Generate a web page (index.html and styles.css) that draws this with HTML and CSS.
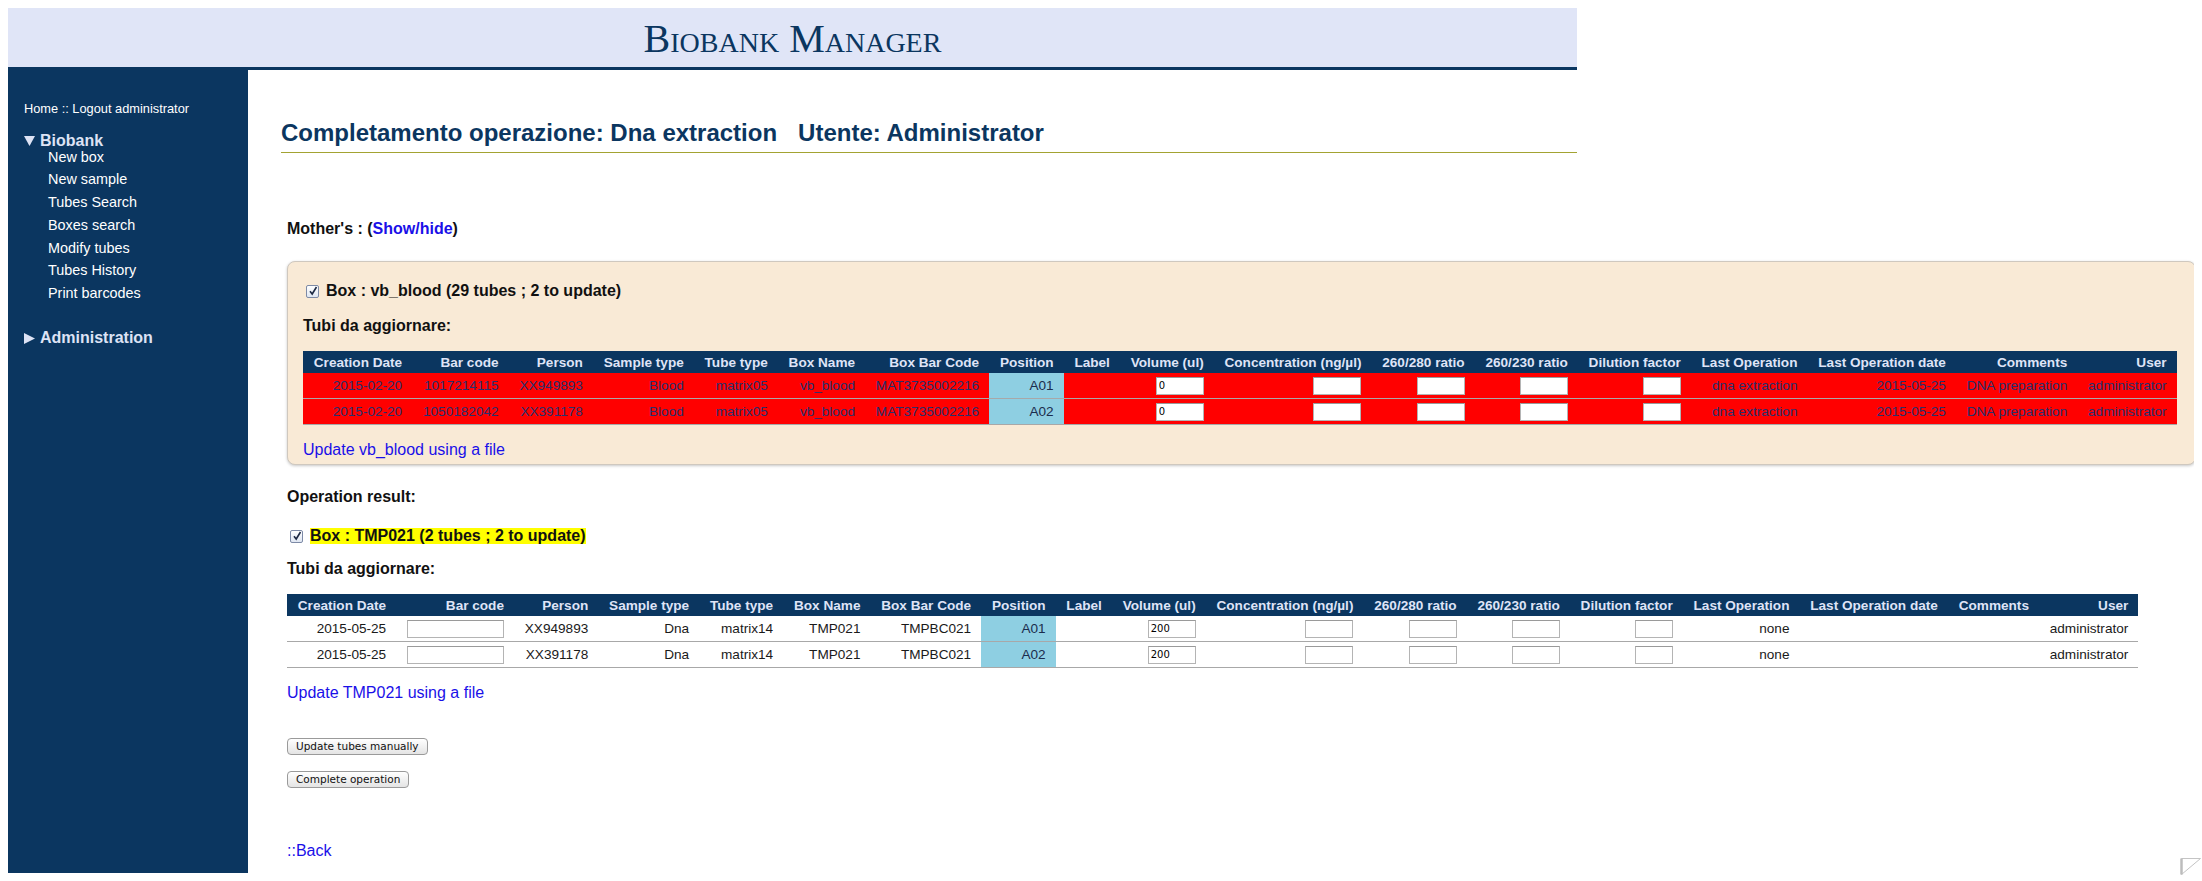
FILE: index.html
```html
<!DOCTYPE html>
<html lang="it">
<head>
<meta charset="utf-8">
<title>Biobank Manager</title>
<link rel="stylesheet" href="styles.css">
</head>
<body>
<header class="banner"><span class="brand">Biobank Manager</span></header>
<div class="layout">
  <nav class="sidebar">
    <div class="userline">Home :: Logout administrator</div>
    <div class="menu-title"><svg class="tri" width="11" height="10" viewBox="0 0 11 10"><polygon points="0,0 11,0 5.5,10" fill="#dde3f5"/></svg>Biobank</div>
    <ul class="menu-items">
      <li>New box</li>
      <li>New sample</li>
      <li>Tubes Search</li>
      <li>Boxes search</li>
      <li>Modify tubes</li>
      <li>Tubes History</li>
      <li>Print barcodes</li>
    </ul>
    <div class="menu-title admin"><svg class="tri" width="11" height="11" viewBox="0 0 11 11"><polygon points="0,0 11,5.5 0,11" fill="#dde3f5"/></svg>Administration</div>
  </nav>
  <main class="main">
    <h1 class="page-title">Completamento operazione: Dna extraction<span class="title-user">Utente: Administrator</span></h1>
    <div class="content">
      <div class="mother">Mother's : (<a class="link" href="#">Show/hide</a>)</div>
      <div class="panel">
        <div class="box-line"><span class="check"><svg width="10" height="10" viewBox="0 0 10 10"><path d="M2 5.2 L4.2 8 L8.5 1" fill="none" stroke="#1e2a44" stroke-width="1.6"/></svg></span>Box : vb_blood (29 tubes ; 2 to update)</div>
        <div class="subhead">Tubi da aggiornare:</div>
        <table class="tubes">
          <thead>
            <tr><th>Creation Date</th><th>Bar code</th><th>Person</th><th>Sample type</th><th>Tube type</th><th>Box Name</th><th>Box Bar Code</th><th>Position</th><th>Label</th><th>Volume (ul)</th><th>Concentration (ng/µl)</th><th>260/280 ratio</th><th>260/230 ratio</th><th>Dilution factor</th><th>Last Operation</th><th>Last Operation date</th><th>Comments</th><th>User</th></tr>
          </thead>
          <tbody class="alert">
            <tr><td>2015-02-20</td><td>1017214115</td><td>XX949893</td><td>Blood</td><td>matrix05</td><td>vb_blood</td><td>MAT3735002216</td><td class="pos">A01</td><td></td><td><input class="fld" value="0"></td><td><input class="fld"></td><td><input class="fld"></td><td><input class="fld"></td><td><input class="fld sm"></td><td>dna extraction</td><td>2015-05-25</td><td>DNA preparation</td><td>administrator</td></tr>
            <tr><td>2015-02-20</td><td>1050182042</td><td>XX391178</td><td>Blood</td><td>matrix05</td><td>vb_blood</td><td>MAT3735002216</td><td class="pos">A02</td><td></td><td><input class="fld" value="0"></td><td><input class="fld"></td><td><input class="fld"></td><td><input class="fld"></td><td><input class="fld sm"></td><td>dna extraction</td><td>2015-05-25</td><td>DNA preparation</td><td>administrator</td></tr>
          </tbody>
        </table>
        <a class="link file-link" href="#">Update vb_blood using a file</a>
      </div>

      <div class="section-title">Operation result:</div>
      <div class="box-line result"><span class="check"><svg width="10" height="10" viewBox="0 0 10 10"><path d="M2 5.2 L4.2 8 L8.5 1" fill="none" stroke="#1e2a44" stroke-width="1.6"/></svg></span><span class="hl">Box : TMP021 (2 tubes ; 2 to update)</span></div>
      <div class="subhead">Tubi da aggiornare:</div>
      <table class="tubes">
        <thead>
          <tr><th>Creation Date</th><th>Bar code</th><th>Person</th><th>Sample type</th><th>Tube type</th><th>Box Name</th><th>Box Bar Code</th><th>Position</th><th>Label</th><th>Volume (ul)</th><th>Concentration (ng/µl)</th><th>260/280 ratio</th><th>260/230 ratio</th><th>Dilution factor</th><th>Last Operation</th><th>Last Operation date</th><th>Comments</th><th>User</th></tr>
        </thead>
        <tbody class="plain">
          <tr><td>2015-05-25</td><td><input class="fld wide"></td><td>XX949893</td><td>Dna</td><td>matrix14</td><td>TMP021</td><td>TMPBC021</td><td class="pos">A01</td><td></td><td><input class="fld" value="200"></td><td><input class="fld"></td><td><input class="fld"></td><td><input class="fld"></td><td><input class="fld sm"></td><td>none</td><td></td><td></td><td>administrator</td></tr>
          <tr><td>2015-05-25</td><td><input class="fld wide"></td><td>XX391178</td><td>Dna</td><td>matrix14</td><td>TMP021</td><td>TMPBC021</td><td class="pos">A02</td><td></td><td><input class="fld" value="200"></td><td><input class="fld"></td><td><input class="fld"></td><td><input class="fld"></td><td><input class="fld sm"></td><td>none</td><td></td><td></td><td>administrator</td></tr>
        </tbody>
      </table>
      <a class="link file-link" href="#">Update TMP021 using a file</a>

      <div class="actions">
        <button class="btn" type="button">Update tubes manually</button>
        <button class="btn" type="button">Complete operation</button>
      </div>

      <a class="link back" href="#">::Back</a>
    </div>
  </main>
</div>
<svg class="grip" width="22" height="19" viewBox="0 0 22 19"><path d="M1.5 1.5 H20.5 L1.5 17.5 Z" fill="#fff" stroke="#c4c4c4" stroke-width="1"/><line x1="1.5" y1="1.5" x2="1.5" y2="17.5" stroke="#bcbcbc" stroke-width="2.5"/></svg>
</body>
</html>
```

FILE: styles.css
```css
html, body {
  overflow: hidden;
}

body {
  margin: 8px;
  font-family: "Liberation Sans", Arial, Helvetica, sans-serif;
  font-size: 16px;
  color: #111;
  background: #fff;
}

.banner {
  width: 1569px;
  height: 59px;
  background: #e0e5f7;
  border-bottom: 3px solid #0b3660;
  text-align: center;
  font-family: "Liberation Serif", "Times New Roman", serif;
  font-variant: small-caps;
  font-size: 40px;
  line-height: 61px;
  color: #0b3660;
}

.layout {
  display: flex;
  align-items: stretch;
}

.sidebar {
  flex: none;
  width: 240px;
  box-sizing: border-box;
  background: #0b3660;
  padding: 31px 0 0 16px;
  color: #fff;
}

.userline {
  font-size: 12.8px;
  line-height: 16px;
}

.menu-title {
  margin-top: 15px;
  font-size: 16px;
  font-weight: bold;
  line-height: 18px;
  color: #dde3f5;
  display: flex;
  align-items: center;
}

.menu-title .tri {
  margin-right: 5px;
  flex: none;
}

.menu-title.admin {
  margin-top: 24px;
}

.menu-items {
  list-style: none;
  margin: -4.5px 0 0;
  padding: 0 0 0 24px;
  font-size: 14.4px;
  line-height: 22.8px;
  color: #fff;
}

.main {
  flex: none;
  width: 1329px;
  box-sizing: border-box;
  padding: 49px 0 12px 33px;
}

.page-title {
  margin: 0;
  padding-bottom: 5px;
  border-bottom: 1px solid #a3a332;
  font-size: 24px;
  line-height: 28px;
  color: #0b3660;
  white-space: nowrap;
}

.title-user {
  margin-left: 21px;
}

.content {
  padding-left: 6px;
}

.mother {
  margin-top: 66px;
  font-weight: bold;
  line-height: 20px;
}

.link {
  color: #1a10e8;
  text-decoration: none;
}

.panel {
  width: max-content;
  margin-top: 22px;
  padding: 19px 18px 4px 15px;
  background: #f9ead6;
  border: 1px solid #cfc8bf;
  border-radius: 8px;
  box-shadow: 0 1px 3px rgba(0, 0, 0, 0.22);
}

.box-line {
  display: flex;
  align-items: center;
  font-weight: bold;
  line-height: 20px;
}

.check {
  flex: none;
  width: 11px;
  height: 11px;
  margin: 0 7px 0 3px;
  border: 1px solid #7d8aa6;
  border-radius: 2px;
  background: linear-gradient(#ffffff, #dfe6f2);
  display: flex;
  align-items: center;
  justify-content: center;
}

.box-line.result {
  margin-top: 21px;
}

.hl {
  background: #ffff00;
  line-height: 16px;
}

.subhead {
  margin-top: 15px;
  font-weight: bold;
  line-height: 20px;
}

.section-title {
  margin-top: 22px;
  font-weight: bold;
  line-height: 20px;
}

.tubes {
  margin-top: 15px;
  border-collapse: collapse;
  font-size: 13.6px;
}

.tubes th {
  height: 22px;
  padding: 0 10px 0 10.8px;
  background: #0b3660;
  color: #dfe4f7;
  font-weight: bold;
  text-align: right;
  white-space: nowrap;
}

.tubes td {
  height: 25px;
  padding: 0 10px 0 10.8px;
  text-align: right;
  white-space: nowrap;
  border-bottom: 1px solid #a8a8a8;
}

.alert td {
  background: #ff0000;
  color: #28306e;
}

.plain td {
  background: #fff;
  color: #1a1a1a;
}

.tubes td.pos {
  background: #8ecfe2;
  color: #1b2d4d;
}

.fld {
  box-sizing: border-box;
  width: 48px;
  height: 18px;
  margin: 0;
  padding: 0 2px;
  vertical-align: middle;
  border: 1px solid #b4b4b4;
  border-top-color: #9a9a9a;
  background: #fff;
  font-family: "DejaVu Sans", sans-serif;
  font-size: 10px;
  color: #000;
  outline: none;
}

.fld.sm {
  width: 38px;
}

.fld.wide {
  width: 97px;
}

.file-link {
  display: block;
  margin-top: 15px;
  line-height: 20px;
  width: max-content;
}

.actions {
  display: flex;
  flex-direction: column;
  align-items: flex-start;
  gap: 16px;
  margin-top: 35px;
}

.btn {
  height: 17px;
  margin: 0;
  padding: 0 8px;
  border: 1px solid #9a9a9a;
  border-radius: 4px;
  background: linear-gradient(#ffffff, #e4e4e4);
  font-family: "DejaVu Sans", sans-serif;
  font-size: 10.5px;
  line-height: 15px;
  color: #111;
}

.back {
  display: block;
  margin-top: 53px;
  line-height: 20px;
  width: max-content;
}

.grip {
  position: absolute;
  left: 2180px;
  top: 857px;
}
```
